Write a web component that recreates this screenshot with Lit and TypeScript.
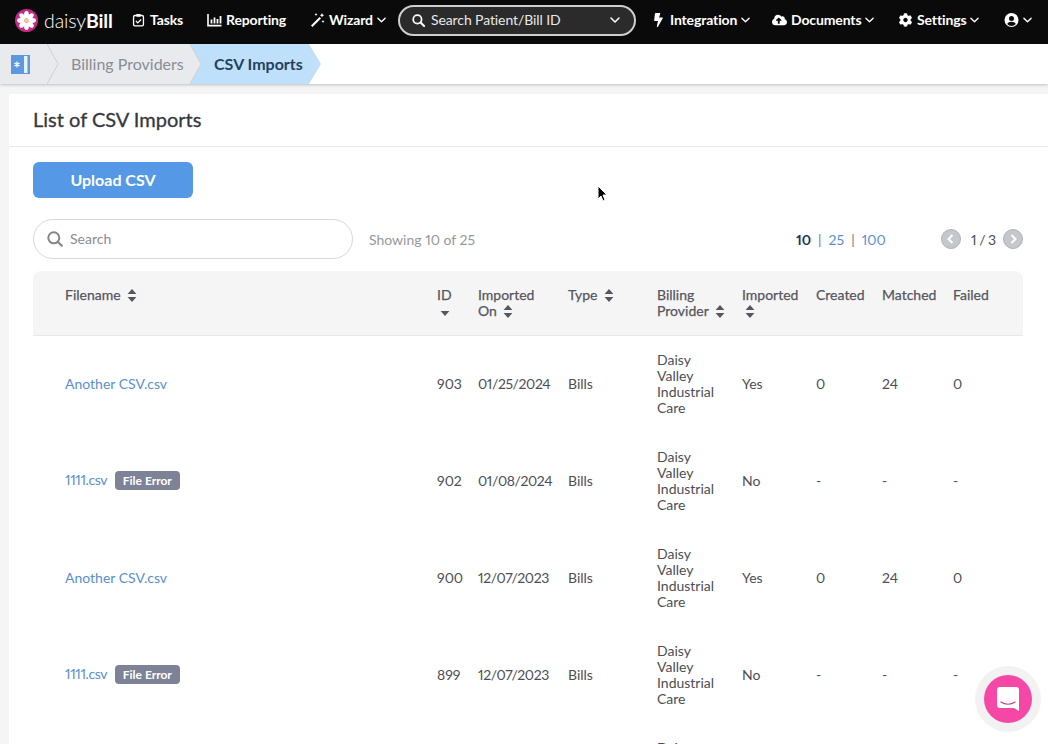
import { LitElement, html, css, svg } from 'lit';
import { customElement } from 'lit/decorators.js';

const chevron = html`<svg class="chev" viewBox="0 0 10 6"><path d="M1 1l4 4 4-4" fill="none" stroke="currentColor" stroke-width="1.5" stroke-linecap="round" stroke-linejoin="round"/></svg>`;

const sortIcon = html`<svg class="sort" viewBox="0 0 10 13"><path d="M5 0l4.4 5H.6zM5 13L.6 8h8.8z" fill="#55565e"/></svg>`;
const sortDown = html`<svg class="sort" viewBox="0 0 10 13"><path d="M5 11L.6 6h8.8z" fill="#55565e"/></svg>`;

const cog = 'M487.4 315.7l-42.6-24.6c4.3-23.2 4.3-47 0-70.2l42.6-24.6c4.9-2.8 7.1-8.6 5.5-14-11.1-35.6-30-67.8-54.7-94.6-3.8-4.1-10-5.1-14.8-2.3L380.8 110c-17.9-15.4-38.5-27.3-60.8-35.1V25.8c0-5.6-3.9-10.5-9.4-11.7-36.7-8.2-74.3-7.8-109.2 0-5.5 1.2-9.4 6.1-9.4 11.7V75c-22.2 7.9-42.8 19.8-60.8 35.1L88.7 85.5c-4.9-2.8-11-1.9-14.8 2.3-24.7 26.7-43.6 58.9-54.7 94.6-1.7 5.4.6 11.2 5.5 14L67.3 221c-4.3 23.2-4.3 47 0 70.2l-42.6 24.6c-4.9 2.8-7.1 8.6-5.5 14 11.1 35.6 30 67.8 54.7 94.6 3.8 4.1 10 5.1 14.8 2.3l42.6-24.6c17.9 15.4 38.5 27.3 60.8 35.1v49.2c0 5.6 3.9 10.5 9.4 11.7 36.7 8.2 74.3 7.8 109.2 0 5.5-1.2 9.4-6.1 9.4-11.7v-49.2c22.2-7.9 42.8-19.8 60.8-35.1l42.6 24.6c4.9 2.8 11 1.9 14.8-2.3 24.7-26.7 43.6-58.9 54.7-94.6 1.5-5.5-.7-11.3-5.6-14.1zM256 336c-44.1 0-80-35.9-80-80s35.9-80 80-80 80 35.9 80 80-35.9 80-80 80z';
const cloud = 'M537.6 226.6c4.1-10.7 6.4-22.4 6.4-34.6 0-53-43-96-96-96-19.7 0-38.1 6-53.3 16.2C367 64.2 315.3 32 256 32c-88.4 0-160 71.6-160 160 0 2.7.1 5.4.2 8.1C40.2 219.8 0 273.2 0 336c0 79.5 64.5 144 144 144h368c70.7 0 128-57.3 128-128 0-61.9-44-113.6-102.4-125.4zM393.4 288H328v112c0 8.8-7.2 16-16 16h-48c-8.8 0-16-7.2-16-16V288h-65.4c-14.3 0-21.4-17.2-11.3-27.3l105.4-105.4c6.2-6.2 16.4-6.2 22.6 0l105.4 105.4c10.1 10.1 2.9 27.3-11.3 27.3z';
const bolt = 'M296 160H180.6l42.6-129.8C227.2 15 215.7 0 200 0H56C44 0 33.8 8.9 32.2 20.8l-32 240C-1.7 275.2 9.5 288 24 288h118.7L96.6 482.5c-3.6 15.2 8 29.5 23.3 29.5 8.4 0 16.4-4.4 20.8-12l176-304c9.3-15.9-2.2-36-20.7-36z';

const petals = [0, 45, 90, 135, 180, 225, 270, 315].map(
  (a) => svg`<ellipse cx="11" cy="5.6" rx="2.3" ry="3.6" fill="#fff" transform="rotate(${a} 11 11)"/>`
);

const rows = [
  { name: 'Another CSV.csv', error: false, id: '903', date: '01/25/2024', imported: 'Yes', created: '0', matched: '24', failed: '0' },
  { name: '1111.csv', error: true, id: '902', date: '01/08/2024', imported: 'No', created: '-', matched: '-', failed: '-' },
  { name: 'Another CSV.csv', error: false, id: '900', date: '12/07/2023', imported: 'Yes', created: '0', matched: '24', failed: '0' },
  { name: '1111.csv', error: true, id: '899', date: '12/07/2023', imported: 'No', created: '-', matched: '-', failed: '-' },
];

@customElement('app-root')
export class AppRoot extends LitElement {
  static styles = css`
    :host {
      display: block;
      width: 1048px;
      height: 744px;
      overflow: hidden;
      position: relative;
      background: #f5f5f5;
      font-family: Lato, 'Liberation Sans', sans-serif;
      font-size: 14px;
      color: #4d4e55;
      font-variant-numeric: proportional-nums;
    }

    /* top nav */
    .topbar {
      height: 44px;
      box-sizing: border-box;
      padding: 0 0 4px 15px;
      background: #0a0a0a;
      color: #fff;
      display: flex;
      align-items: center;
      font-weight: 700;
      white-space: nowrap;
    }
    .logo {
      display: flex;
      align-items: center;
      gap: 6px;
      width: 116px;
      font-size: 19.5px;
      font-weight: 300;
      letter-spacing: -0.1px;
    }
    .logo b { font-weight: 700; }
    .logo svg { width: 23px; height: 23px; }
    .nav {
      display: flex;
      align-items: center;
      gap: 4px;
      font-size: 14px;
      letter-spacing: -0.13px;
    }
    .nav span, .globalsearch span { margin-bottom: 2px; }
    .nav svg.ic { height: 14px; width: 15px; fill: #fff; }
    .chev { width: 9px; height: 6px; color: #fff; }
    .tasks { width: 76px; }
    .reporting { width: 103px; }
    .wizard { width: 88px; }
    .integration { width: 121px; }
    .documents { width: 126px; }
    .settings { width: 106px; }
    .globalsearch {
      width: 238px;
      height: 31px;
      box-sizing: border-box;
      margin-right: 15px;
      border: 2px solid #cfcfcf;
      border-radius: 16px;
      background: #2b2b2b;
      display: flex;
      align-items: center;
      padding: 0 14px 0 12px;
      gap: 6px;
      font-weight: 400;
      font-size: 14px;
      letter-spacing: -0.1px;
      color: #e8e8e8;
    }
    .globalsearch span { flex: 1; }
    .globalsearch svg.ic { width: 13px; height: 13px; }
    .globalsearch .chev { width: 10px; }

    /* breadcrumb */
    .crumbs {
      height: 40px;
      display: flex;
      background: #fff;
      box-shadow: 0 1px 3px rgba(0, 0, 0, 0.22);
      position: relative;
      font-size: 16px;
    }
    .crumbs svg.sep { width: 12px; height: 40px; flex: none; }
    .home {
      width: 47px;
      background: #e9eaed;
      display: flex;
      align-items: center;
      padding-left: 11px;
      box-sizing: border-box;
    }
    .home svg { width: 19px; height: 19px; }
    .providers {
      width: 131px;
      padding-left: 12px;
      box-sizing: border-box;
      background: #e9eaed;
      color: #8a8d96;
      line-height: 40px;
    }
    .current {
      padding-left: 12px;
      width: 107px;
      box-sizing: border-box;
      background: #bfe0fb;
      color: #25405c;
      font-weight: 700;
      line-height: 40px;
    }

    /* card */
    .main { padding: 10px 0 0 9px; }
    .card { background: #fff; height: 660px; }
    .card-head {
      height: 53px;
      box-sizing: border-box;
      border-bottom: 1px solid #e8e8e8;
      padding: 11px 0 0 24px;
      font-size: 20px;
      line-height: 28px;
      font-weight: 400;
      -webkit-text-stroke: 0.3px #37383d;
      color: #37383d;
    }
    .body { padding: 15px 25px 0 24px; }
    .upload {
      display: block;
      width: 160px;
      height: 36px;
      padding: 0 0 2px;
      border: 0;
      border-radius: 6px;
      background: #5599e6;
      color: #fff;
      font: 700 16px Lato, 'Liberation Sans', sans-serif;
    }
    .tools {
      display: flex;
      align-items: center;
      margin-top: 21px;
      height: 40px;
    }
    .search {
      width: 320px;
      height: 40px;
      box-sizing: border-box;
      border: 1px solid #d9d9d9;
      border-radius: 20px;
      display: flex;
      align-items: center;
      gap: 7px;
      padding-left: 13px;
      color: #8b8c92;
    }
    .search span { margin-bottom: 2px; }
    .search svg { width: 16px; height: 16px; }
    .showing { margin-left: 16px; color: #96979c; flex: 1; }
    .sizes { display: flex; gap: 7px; color: #5b8fcf; width: 145px; }
    .sizes b { color: #17365a; }
    .sizes i { font-style: normal; color: #777; }
    .pager { display: flex; align-items: center; gap: 7px; color: #4d4e55; }
    .pager svg { width: 20px; height: 20px; }
    .pager span { width: 25px; margin-left: 3px; letter-spacing: -0.5px; white-space: nowrap; }

    /* table */
    .table { margin-top: 12px; }
    .row {
      display: grid;
      grid-template-columns: 404px 41px 90px 89px 85px 74px 66px 71px 70px;
    }
    .row > div:first-child { padding-left: 32px; }
    .thead {
      height: 65px;
      box-sizing: border-box;
      padding-top: 16px;
      background: #f5f5f5;
      border-radius: 8px 8px 0 0;
      border-bottom: 1px solid #e9e9e9;
      font-weight: 400;
      -webkit-text-stroke: 0.25px #55565e;
      line-height: 16px;
      color: #55565e;
    }
    .sort { width: 10px; height: 13px; margin-left: 3px; vertical-align: -2px; }
    .tr {
      height: 97px;
      box-sizing: border-box;
      padding-bottom: 2px;
      align-items: center;
      line-height: 16px;
    }
    .tr a { color: #5b8fcf; text-decoration: none; }
    .tr a.digits { letter-spacing: -0.4px; }
    .date { letter-spacing: -0.4px; }
    .badge {
      display: inline-block;
      margin-left: 4px;
      padding: 0 8px;
      height: 19px;
      line-height: 19px;
      border-radius: 4px;
      background: #7e8296;
      color: #fff;
      font-size: 12px;
      font-weight: 700;
    }

    /* overlays */
    .chat {
      position: absolute;
      left: 975px;
      top: 666px;
      width: 66px;
      height: 66px;
      border-radius: 50%;
      background: #f2f2f2;
      display: flex;
      align-items: center;
      justify-content: center;
    }
    .chat-btn {
      width: 48px;
      height: 48px;
      border-radius: 50%;
      background: #f548a6;
      display: flex;
      align-items: center;
      justify-content: center;
    }
    .chat-btn svg { width: 22px; height: 24px; }
    .cursor { position: absolute; left: 597px; top: 185px; width: 11px; height: 18px; }
  `;

  render() {
    return html`
      <header class="topbar">
        <div class="logo">
          <svg viewBox="0 0 22 22">
            <circle cx="11" cy="11" r="11" fill="#c12b86"/>
            ${petals}
            <circle cx="11" cy="11" r="1.8" fill="#f1d36a"/>
          </svg>
          <span>daisy<b>Bill</b></span>
        </div>
        <div class="nav tasks">
          <svg class="ic" viewBox="0 0 14 15" style="fill:none"><rect x="1.7" y="2.7" width="10.6" height="11" rx="1.5" stroke="#fff" stroke-width="1.4"/><rect x="4.5" y="1" width="5" height="3" rx="1" fill="#fff"/><path d="M4.2 8.6l2 2 3.6-3.6" stroke="#fff" stroke-width="1.4" fill="none"/></svg>
          <span>Tasks</span>
        </div>
        <div class="nav reporting">
          <svg class="ic" viewBox="0 0 15 14" style="fill:none"><path d="M1 1v11.6h13.5" stroke="#fff" stroke-width="1.6"/><path d="M4.5 6.5v4M7.5 4.5v6M10.5 6v4.500M13.500 3v7.500" stroke="#fff" stroke-width="1.800"/></svg>
          <span>Reporting</span>
        </div>
        <div class="nav wizard">
          <svg class="ic" viewBox="0 0 15 14"><path d="M1 12.500L9.500 4l1.500 1.500L2.500 14z"/><path d="M12 0l.7 1.500 1.500.7-1.500.7-.7 1.500-.7-1.500-1.500-.7 1.500-.7zM6 0l.5 1 1 .5-1 .5L6 3l-.5-1-1-.5 1-.5zM13 7l.5 1 1 .5-1 .5-.5 1-.5-1-1-.5 1-.5z"/></svg>
          <span>Wizard</span>${chevron}
        </div>
        <div class="globalsearch">
          <svg class="ic" viewBox="0 0 14 14"><circle cx="5.800" cy="5.800" r="4.500" fill="none" stroke="#fff" stroke-width="1.900"/><path d="M9.200 9.200l3.800 3.800" stroke="#fff" stroke-width="2.200" stroke-linecap="round"/></svg>
          <span>Search Patient/Bill ID</span>${chevron}
        </div>
        <div class="nav integration">
          <svg class="ic" viewBox="0 0 320 512"><path d=${bolt}/></svg>
          <span>Integration</span>${chevron}
        </div>
        <div class="nav documents">
          <svg class="ic" viewBox="0 0 640 512"><path d=${cloud}/></svg>
          <span>Documents</span>${chevron}
        </div>
        <div class="nav settings">
          <svg class="ic" viewBox="0 0 512 512"><path d=${cog}/></svg>
          <span>Settings</span>${chevron}
        </div>
        <div class="nav user">
          <svg class="ic" viewBox="0 0 14 14"><circle cx="7" cy="7" r="7"/><circle cx="7" cy="5.500" r="2.500" fill="#0a0a0a"/><path d="M2.700 11c.8-1.500 2.400-2.300 4.300-2.300s3.500.8 4.300 2.300C10.200 12.300 8.700 13 7 13s-3.200-.7-4.300-2z" fill="#0a0a0a"/></svg>
          ${chevron}
        </div>
      </header>

      <nav class="crumbs">
        <div class="home">
          <svg viewBox="0 0 19 19">
            <rect width="19" height="19" fill="#5d97e0"/>
            <rect x="13" y="1" width="3.500" height="17" fill="#e6f1fc"/>
            <path d="M6 6.500v6M3.400 8l5.200 3M8.600 8l-5.200 3" stroke="#fff" stroke-width="1.200"/>
          </svg>
        </div>
        <svg class="sep" viewBox="0 0 12 40"><rect width="12" height="40" fill="#e9eaed"/><path d="M0 0l11 20L0 40" fill="none" stroke="#cdd0d5"/></svg>
        <div class="providers">Billing Providers</div>
        <svg class="sep" viewBox="0 0 12 40"><rect width="12" height="40" fill="#bfe0fb"/><path d="M0 0l11 20L0 40z" fill="#e9eaed"/><path d="M0 0l11 20L0 40" fill="none" stroke="#cdd0d5"/></svg>
        <div class="current">CSV Imports</div>
        <svg class="sep" viewBox="0 0 12 40"><path d="M0 0l12 20L0 40z" fill="#bfe0fb"/></svg>
      </nav>

      <div class="main">
        <section class="card">
          <div class="card-head">List of CSV Imports</div>
          <div class="body">
            <button class="upload">Upload CSV</button>
            <div class="tools">
              <div class="search">
                <svg viewBox="0 0 16 16"><circle cx="6.800" cy="6.800" r="5.500" fill="none" stroke="#85868c" stroke-width="2"/><path d="M10.800 10.800l4 4" stroke="#85868c" stroke-width="2.200" stroke-linecap="round"/></svg>
                <span>Search</span>
              </div>
              <div class="showing">Showing 10 of 25</div>
              <div class="sizes"><b>10</b><i>|</i><span>25</span><i>|</i><span>100</span></div>
              <div class="pager">
                <svg viewBox="0 0 20 20"><circle cx="10" cy="10" r="9.500" fill="#c4c7cc" stroke="#aeb1b7"/><path d="M11.500 6l-4 4 4 4" fill="none" stroke="#fff" stroke-width="2"/></svg>
                <span>1 / 3</span>
                <svg viewBox="0 0 20 20"><circle cx="10" cy="10" r="9.500" fill="#c4c7cc" stroke="#aeb1b7"/><path d="M8.500 6l4 4-4 4" fill="none" stroke="#fff" stroke-width="2"/></svg>
              </div>
            </div>
            <div class="table">
              <div class="row thead">
                <div>Filename ${sortIcon}</div>
                <div>ID<br />${sortDown}</div>
                <div>Imported<br />On ${sortIcon}</div>
                <div>Type ${sortIcon}</div>
                <div>Billing<br />Provider ${sortIcon}</div>
                <div>Imported<br />${sortIcon}</div>
                <div>Created</div>
                <div>Matched</div>
                <div>Failed</div>
              </div>
              ${rows.map(
                (r) => html`
                  <div class="row tr">
                    <div><a class=${r.error ? 'digits' : ''} href="#">${r.name}</a>${r.error ? html` <span class="badge">File Error</span>` : ''}</div>
                    <div>${r.id}</div>
                    <div class="date">${r.date}</div>
                    <div>Bills</div>
                    <div>Daisy<br />Valley<br />Industrial<br />Care</div>
                    <div>${r.imported}</div>
                    <div>${r.created}</div>
                    <div>${r.matched}</div>
                    <div>${r.failed}</div>
                  </div>
                `
              )}
              <div class="row tr">
                <div></div><div></div><div></div><div></div>
                <div>Daisy<br />Valley<br />Industrial<br />Care</div>
              </div>
            </div>
          </div>
        </section>
      </div>

      <svg class="cursor" viewBox="0 0 11 18"><path d="M1 1v13l3-3 2 5 2-1-2-5h4z" fill="#000" stroke="#fff" stroke-width="1"/></svg>
      <div class="chat">
        <div class="chat-btn">
          <svg viewBox="0 0 22 24"><path d="M3 0h16a3 3 0 0 1 3 3v21l-5-3H3a3 3 0 0 1-3-3V3a3 3 0 0 1 3-3z" fill="#fff"/><path d="M4 15c4 3 10 3 14 0" fill="none" stroke="#c13f86" stroke-width="1.200" stroke-linecap="round"/></svg>
        </div>
      </div>
    `;
  }
}
